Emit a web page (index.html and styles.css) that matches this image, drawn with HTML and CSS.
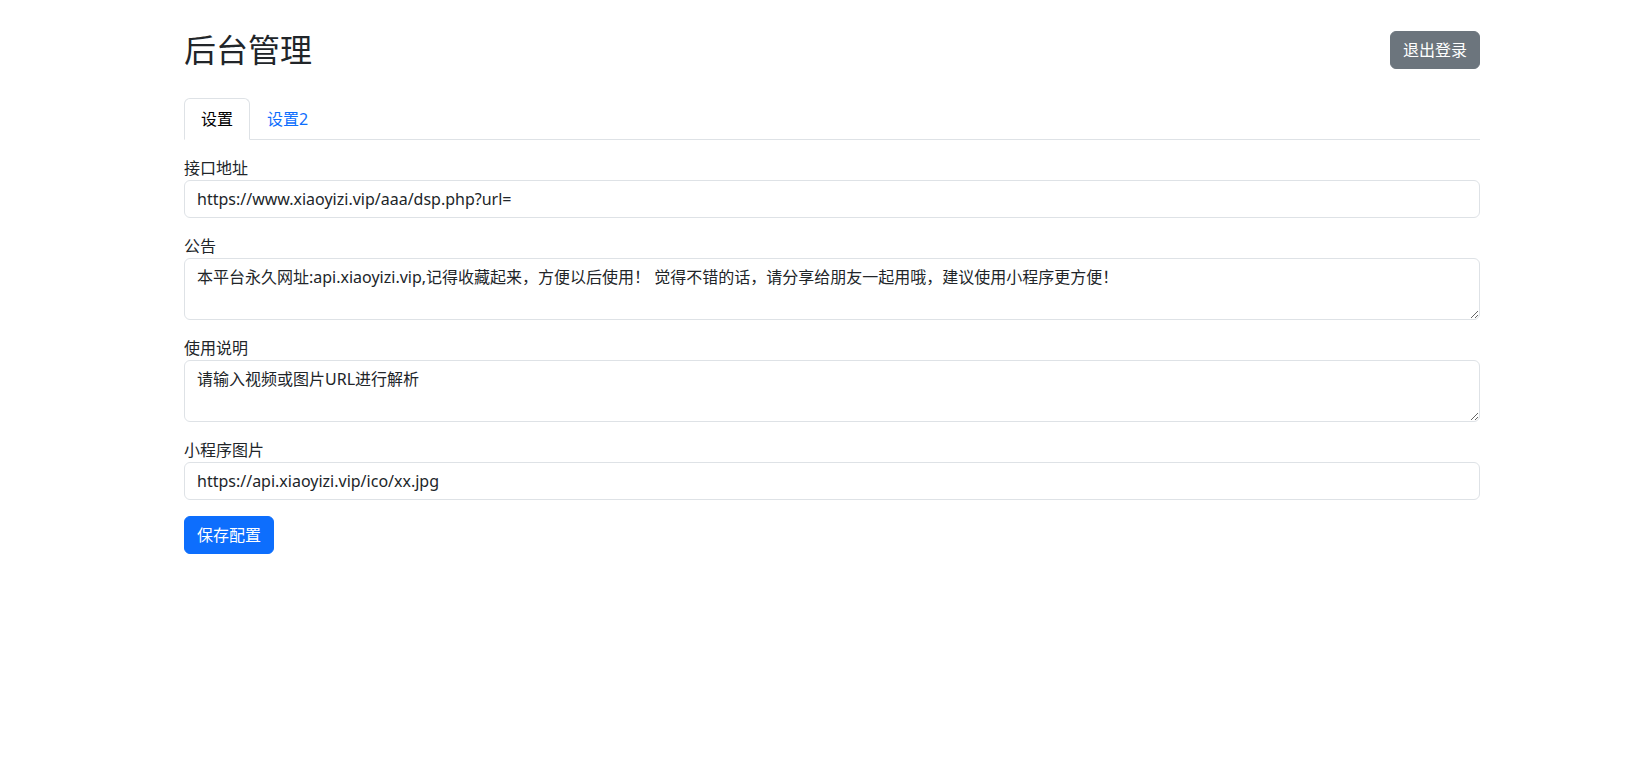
FILE: index.html
```html
<!DOCTYPE html>
<html lang="zh-CN">
<head>
    <meta charset="UTF-8">
    <meta name="viewport" content="width=device-width, initial-scale=1.0">
    <title>后台管理</title>
    <link rel="stylesheet" href="styles.css">
</head>
<body>
    <div class="container">
        <div class="header">
            <h1>后台管理</h1>
            <button class="btn btn-secondary">退出登录</button>
        </div>

        <ul class="nav-tabs">
            <li><a href="#" class="nav-link active">设置</a></li>
            <li><a href="#" class="nav-link">设置2</a></li>
        </ul>

        <form class="tab-content">
            <div class="form-group">
                <label for="apiUrl">接口地址</label>
                <input type="text" id="apiUrl" class="form-control" value="https://www.xiaoyizi.vip/aaa/dsp.php?url=">
            </div>
            <div class="form-group">
                <label for="notice">公告</label>
                <textarea id="notice" class="form-control" rows="2">本平台永久网址:api.xiaoyizi.vip,记得收藏起来，方便以后使用！ 觉得不错的话，请分享给朋友一起用哦，建议使用小程序更方便！</textarea>
            </div>
            <div class="form-group">
                <label for="usage">使用说明</label>
                <textarea id="usage" class="form-control" rows="2">请输入视频或图片URL进行解析</textarea>
            </div>
            <div class="form-group">
                <label for="miniImg">小程序图片</label>
                <input type="text" id="miniImg" class="form-control" value="https://api.xiaoyizi.vip/ico/xx.jpg">
            </div>
            <button type="button" class="btn btn-primary">保存配置</button>
        </form>
    </div>
</body>
</html>
```

FILE: styles.css
```css
* {
    box-sizing: border-box;
}
body {
    margin: 0;
    font-family: "Noto Sans", "Noto Sans CJK SC", sans-serif;
    font-size: 16px;
    line-height: 1.5;
    color: #212529;
    background-color: #fff;
}
.container {
    width: 1296px;
    margin-left: 184px;
    padding-top: 31px;
}
.header {
    display: flex;
    justify-content: space-between;
    align-items: center;
}
h1 {
    margin: 0;
    font-size: 32px;
    font-weight: 400;
    line-height: 38px;
}
.btn {
    display: inline-block;
    padding: 6px 12px;
    font-family: inherit;
    font-size: 16px;
    line-height: 24px;
    color: #fff;
    border: 1px solid transparent;
    border-radius: 6px;
    cursor: pointer;
}
.btn-secondary {
    background-color: #6c757d;
    border-color: #6c757d;
}
.btn-primary {
    background-color: #0d6efd;
    border-color: #0d6efd;
}
.nav-tabs {
    display: flex;
    list-style: none;
    margin: 29px 0 0;
    padding: 0;
    border-bottom: 1px solid #dee2e6;
}
.nav-link {
    display: block;
    margin-bottom: -1px;
    padding: 8px 16px;
    color: #0d6efd;
    text-decoration: none;
    border: 1px solid transparent;
    border-top-left-radius: 6px;
    border-top-right-radius: 6px;
}
.nav-link.active {
    color: #000;
    background-color: #fff;
    border-color: #dee2e6 #dee2e6 #fff;
}
.tab-content {
    padding-top: 16px;
}
.form-group {
    margin-bottom: 16px;
}
label {
    display: block;
}
.form-control {
    display: block;
    width: 100%;
    padding: 6px 12px;
    font-family: inherit;
    font-size: 16px;
    line-height: 24px;
    color: #212529;
    background-color: #fff;
    border: 1px solid #dee2e6;
    border-radius: 6px;
}
textarea.form-control {
    height: 62px;
    resize: vertical;
}
```
